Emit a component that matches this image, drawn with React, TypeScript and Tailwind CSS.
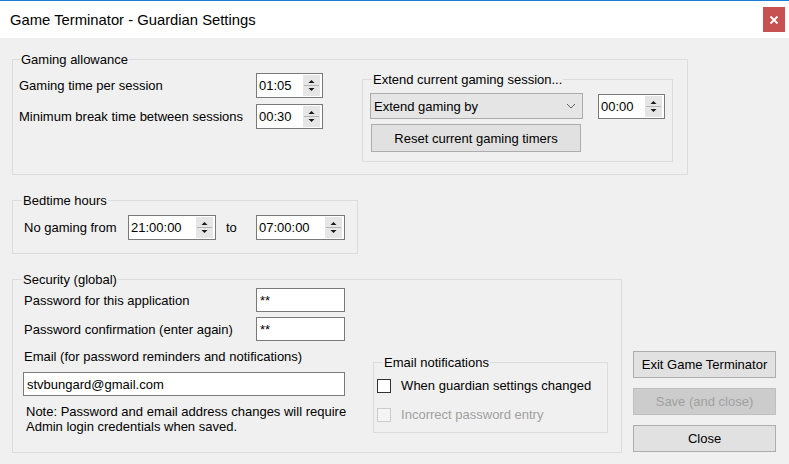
import React from "react"

// Win10 style WinForms dialog: Game Terminator - Guardian Settings

function Spinner({ value, width }: { value: string; width: string }) {
  return (
    <div className={`${width} h-[25px] bg-white border border-[#7a7a7a] flex items-center justify-between`}>
      <span className="pl-[2px] text-black">{value}</span>
      <svg width="17" height="21" viewBox="0 0 17 21" className="mr-[2px]">
        <rect x="0" y="0" width="17" height="21" fill="#e6e6e6" />
        <line x1="1" y1="10.5" x2="16" y2="10.5" stroke="#b4b4b4" strokeWidth="1" />
        <polygon points="5.5,8 11.5,8 8.5,5" fill="#1a1a1a" />
        <polygon points="5.5,13 11.5,13 8.5,16" fill="#1a1a1a" />
      </svg>
    </div>
  )
}

function Button({ label, width, height, disabled }: { label: string; width: string; height: string; disabled?: boolean }) {
  return (
    <div
      className={`${width} ${height} flex items-center justify-center border ${
        disabled ? "bg-[#cccccc] border-[#bfbfbf] text-[#a0a0a0]" : "bg-[#e1e1e1] border-[#adadad] text-black"
      }`}
    >
      {label}
    </div>
  )
}

function TextBox({ value, width }: { value: string; width: string }) {
  return (
    <div className={`${width} h-[24px] bg-white border border-[#7a7a7a] flex items-center pl-[3px]`}>
      {value}
    </div>
  )
}

export default function App() {
  return (
    <div
      className="w-[789px] h-[464px] overflow-hidden bg-[#f0f0f0] text-[13px] leading-[15px] text-black"
      style={{ fontFamily: '"Liberation Sans", Arial, sans-serif' }}
    >
      {/* Title bar */}
      <div className="h-[1px] bg-[#1a7fd4]" />
      <div className="h-[37px] bg-white flex items-center">
        <span className="ml-[10px] text-[14.8px] leading-[18px]">Game Terminator - Guardian Settings</span>
        <div className="ml-auto mr-[4px] w-[22px] h-[25px] bg-[#c75050] flex items-center justify-center">
          <svg width="10" height="10" viewBox="0 0 10 10">
            <path d="M1.5 1.5 L8.5 8.5 M8.5 1.5 L1.5 8.5" stroke="white" strokeWidth="1.8" />
          </svg>
        </div>
      </div>

      {/* Body */}
      <div className="pl-[12px] pt-[14px] flex flex-col">
        {/* Gaming allowance */}
        <fieldset className="w-[676px] h-[123px] border border-[#dcdcdc]">
          <legend className="ml-[7px] px-[1px]">Gaming allowance</legend>
          <div className="flex items-start">
            <div className="ml-[6px] mt-[6px] flex flex-col gap-[6px]">
              <div className="flex items-center">
                <span className="w-[237px]">Gaming time per session</span>
                <Spinner value="01:05" width="w-[67px]" />
              </div>
              <div className="flex items-center">
                <span className="w-[237px]">Minimum break time between sessions</span>
                <Spinner value="00:30" width="w-[67px]" />
              </div>
            </div>

            <fieldset className="ml-[39px] mt-[5px] w-[311px] h-[90px] border border-[#dcdcdc]">
              <legend className="ml-[9px] px-[1px]">Extend current gaming session...</legend>
              <div className="flex items-center mt-[6px] ml-[7px]">
                <div className="w-[213px] h-[26px] bg-[#e5e5e5] border border-[#acacac] flex items-center justify-between">
                  <span className="pl-[3px]">Extend gaming by</span>
                  <svg width="10" height="6" viewBox="0 0 10 6" className="mr-[6px]">
                    <polyline points="1,1 5,5 9,1" fill="none" stroke="#606060" strokeWidth="1" />
                  </svg>
                </div>
                <div className="ml-[15px]">
                  <Spinner value="00:00" width="w-[67px]" />
                </div>
              </div>
              <div className="ml-[8px] mt-[5px]">
                <Button label="Reset current gaming timers" width="w-[210px]" height="h-[28px]" />
              </div>
            </fieldset>
          </div>
        </fieldset>

        {/* Bedtime hours */}
        <fieldset className="mt-[18px] w-[346px] h-[61px] border border-[#dcdcdc]">
          <legend className="ml-[9px] px-[1px]">Bedtime hours</legend>
          <div className="flex items-center ml-[11px] mt-[7px]">
            <span className="w-[104px]">No gaming from</span>
            <Spinner value="21:00:00" width="w-[88px]" />
            <span className="w-[40px] pl-[10px]">to</span>
            <Spinner value="07:00:00" width="w-[89px]" />
          </div>
        </fieldset>

        {/* Security + buttons */}
        <div className="mt-[18px] flex items-start">
          <fieldset className="w-[610px] h-[181px] border border-[#dcdcdc]">
            <legend className="ml-[9px] px-[1px]">Security (global)</legend>
            <div className="flex items-start">
              <div className="ml-[10px] mt-[1px] flex flex-col">
                <div className="flex items-center">
                  <span className="w-[233px] pl-[1px]">Password for this application</span>
                  <TextBox value="**" width="w-[89px]" />
                </div>
                <div className="flex items-center mt-[5px]">
                  <span className="w-[233px] pl-[1px]">Password confirmation (enter again)</span>
                  <TextBox value="**" width="w-[89px]" />
                </div>
                <span className="mt-[8px] pl-[1px]">Email (for password reminders and notifications)</span>
                <div className="mt-[8px]">
                  <TextBox value="stvbungard@gmail.com" width="w-[322px]" />
                </div>
                <div className="mt-[8px] pl-[3px]">
                  <div>Note: Password and email address changes will require</div>
                  <div>Admin login credentials when saved.</div>
                </div>
              </div>

              <fieldset className="ml-[27px] mt-[68px] w-[235px] h-[78px] border border-[#dcdcdc]">
                <legend className="ml-[9px] px-[1px]">Email notifications</legend>
                <div className="flex flex-col ml-[3px] mt-[1px]">
                  <div className="h-[29px] flex items-center">
                    <div className="w-[14px] h-[14px] bg-white border border-[#333333]" />
                    <span className="ml-[10px]">When guardian settings changed</span>
                  </div>
                  <div className="h-[29px] flex items-center">
                    <div className="w-[14px] h-[14px] bg-[#f4f4f4] border border-[#cccccc]" />
                    <span className="ml-[10px] text-[#a0a0a0]">Incorrect password entry</span>
                  </div>
                </div>
              </fieldset>
            </div>
          </fieldset>

          <div className="ml-[11px] mt-[79px] flex flex-col gap-[10px]">
            <Button label="Exit Game Terminator" width="w-[143px]" height="h-[27px]" />
            <Button label="Save (and close)" width="w-[143px]" height="h-[27px]" disabled />
            <Button label="Close" width="w-[143px]" height="h-[27px]" />
          </div>
        </div>
      </div>
    </div>
  )
}
